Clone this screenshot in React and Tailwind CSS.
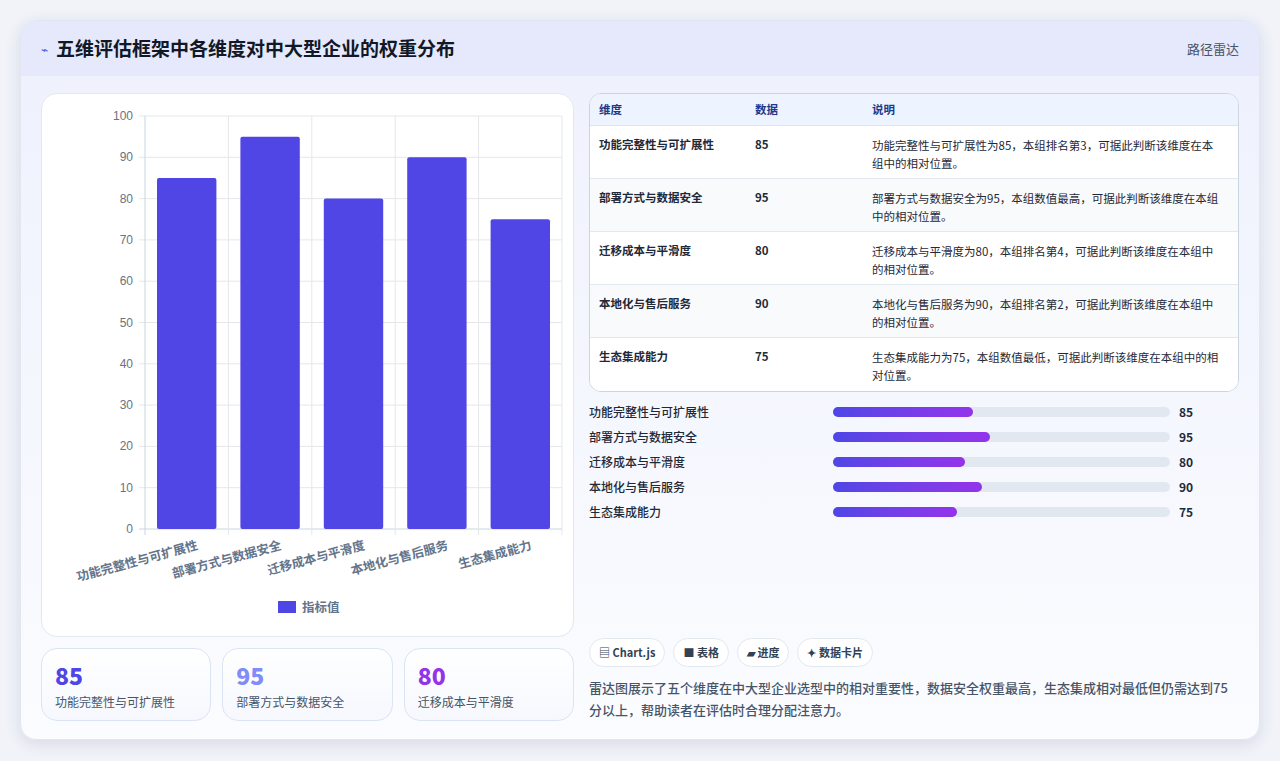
import React from 'react';

const data = [
  { name: '功能完整性与可扩展性', value: 85, desc: '功能完整性与可扩展性为85，本组排名第3，可据此判断该维度在本组中的相对位置。' },
  { name: '部署方式与数据安全', value: 95, desc: '部署方式与数据安全为95，本组数值最高，可据此判断该维度在本组中的相对位置。' },
  { name: '迁移成本与平滑度', value: 80, desc: '迁移成本与平滑度为80，本组排名第4，可据此判断该维度在本组中的相对位置。' },
  { name: '本地化与售后服务', value: 90, desc: '本地化与售后服务为90，本组排名第2，可据此判断该维度在本组中的相对位置。' },
  { name: '生态集成能力', value: 75, desc: '生态集成能力为75，本组数值最低，可据此判断该维度在本组中的相对位置。' },
];

const font = { fontFamily: '"Noto Sans CJK SC", "Noto Sans", sans-serif' };

const BarChart = () => {
  const L = 103, R = 520, T = 22, B = 435;
  const cw = (R - L) / 5;
  const y = (v) => B - (v / 100) * (B - T);
  return (
    <svg width="533" height="543" className="block">
      {[0, 10, 20, 30, 40, 50, 60, 70, 80, 90, 100].map((v) => (
        <g key={v}>
          <line x1={L - 6} x2={R} y1={y(v)} y2={y(v)} stroke={v === 0 ? '#cbd5e1' : '#e5e7eb'} />
          <text x={L - 12} y={y(v) + 4} textAnchor="end" fontSize="12" fill="#6b7280" fontFamily="Liberation Sans, sans-serif">{v}</text>
        </g>
      ))}
      {[0, 1, 2, 3, 4, 5].map((i) => (
        <line key={i} x1={L + i * cw} x2={L + i * cw} y1={T} y2={B + 6} stroke={i === 0 ? '#cbd5e1' : '#e5e7eb'} />
      ))}
      {data.map((d, i) => (
        <g key={d.name}>
          <rect x={L + i * cw + 12} y={y(d.value)} width={cw - 24} height={B - y(d.value)} rx="2" fill="#4f46e5" />
          <text
            x={L + i * cw + cw / 2 + 12}
            y={B + 20}
            textAnchor="end"
            fontSize="12.5"
            fontWeight="700"
            fill="#64748b"
            transform={`rotate(-15 ${L + i * cw + cw / 2 + 12} ${B + 20})`}
            style={font}
          >
            {d.name}
          </text>
        </g>
      ))}
      <rect x="236" y="507" width="18" height="12" fill="#4f46e5" />
      <text x="260" y="518" fontSize="12.5" fill="#64748b" fontWeight="700" style={font}>指标值</text>
    </svg>
  );
};

export default function App() {
  return (
    <div className="min-h-screen bg-[#f1f3f9] p-5" style={font}>
      <div className="rounded-2xl bg-gradient-to-b from-[#eef1fd] to-[#fbfcff] shadow-[0_4px_16px_rgba(30,41,90,0.12)] border border-[#e2e6f3] overflow-hidden">
        <div className="h-[55px] flex items-center justify-between px-5 bg-[#e6e9fb]">
          <div className="flex items-center gap-2">
            <span className="text-[#3b5bdb] text-xs">⌁</span>
            <h1 className="text-[19px] font-bold text-[#111827]">五维评估框架中各维度对中大型企业的权重分布</h1>
          </div>
          <span className="text-[13px] text-[#475569]">路径雷达</span>
        </div>
        <div className="flex gap-[15px] px-5 pt-[17px] pb-[18px]">
          <div className="w-[533px] flex flex-col gap-[11px]">
            <div className="bg-white rounded-2xl border border-[#e2e8f0] h-[544px]">
              <BarChart />
            </div>
            <div className="grid grid-cols-3 gap-[11px]">
              {[
                ['85', 'text-[#4f46e5]', data[0].name],
                ['95', 'text-[#818cf8]', data[1].name],
                ['80', 'text-[#9333ea]', data[2].name],
              ].map(([v, c, n]) => (
                <div key={n} className="rounded-2xl border border-[#dbe4f3] bg-gradient-to-b from-white to-[#f6f8fe] h-[73px] px-[13px] pt-[12px]">
                  <div className={`text-[23px] font-extrabold leading-[28px] ${c}`}>{v}</div>
                  <div className="text-[12px] text-[#475569] mt-[4px]">{n}</div>
                </div>
              ))}
            </div>
          </div>
          <div className="flex-1 flex flex-col">
            <div className="rounded-xl border border-[#cbd5e1] overflow-hidden bg-white">
              <div className="grid grid-cols-[156px_117px_1fr] bg-[#eef4ff] h-[32px] items-center px-[9px] text-[11.5px] font-bold text-[#1e3a8a] border-b border-[#dbe4f3]">
                <span>维度</span><span>数据</span><span>说明</span>
              </div>
              {data.map((d, i) => (
                <div key={d.name} className={`grid grid-cols-[156px_117px_1fr] h-[53px] px-[9px] pt-[10px] text-[11.5px] text-[#1f2937] ${i % 2 ? 'bg-[#f8fafc]' : 'bg-white'} ${i < 4 ? 'border-b border-[#e2e8f0]' : ''}`}>
                  <span className="font-bold">{d.name}</span>
                  <span className="font-bold">{d.value}</span>
                  <span className="leading-[18px] pr-2">{d.desc}</span>
                </div>
              ))}
            </div>
            <div className="flex flex-col gap-[7px] mt-[11px]">
              {data.map((d) => (
                <div key={d.name} className="flex items-center h-[18px] text-[12px] text-[#1f2937]">
                  <span className="w-[244px] font-medium">{d.name}</span>
                  <div className="w-[337px] h-[10px] rounded-full bg-[#e2e8f0]">
                    <div className="h-full rounded-full bg-gradient-to-r from-[#4f46e5] to-[#9333ea]" style={{ width: `${d.value * 0.49}%` }} />
                  </div>
                  <span className="ml-[9px] font-bold text-[12px]">{d.value}</span>
                </div>
              ))}
            </div>
            <div className="flex-1" />
            <div className="flex gap-[8px]">
              {['▤ Chart.js', '■ 表格', '▰ 进度', '✦ 数据卡片'].map((t) => (
                <span key={t} className="h-[29px] px-[9px] flex items-center rounded-full border border-[#e2e8f0] bg-white text-[11px] font-bold text-[#334155]">{t}</span>
              ))}
            </div>
            <p className="mt-[10px] text-[13px] leading-[22px] text-[#475569] font-medium">
              雷达图展示了五个维度在中大型企业选型中的相对重要性，数据安全权重最高，生态集成相对最低但仍需达到75分以上，帮助读者在评估时合理分配注意力。
            </p>
          </div>
        </div>
      </div>
    </div>
  );
}
